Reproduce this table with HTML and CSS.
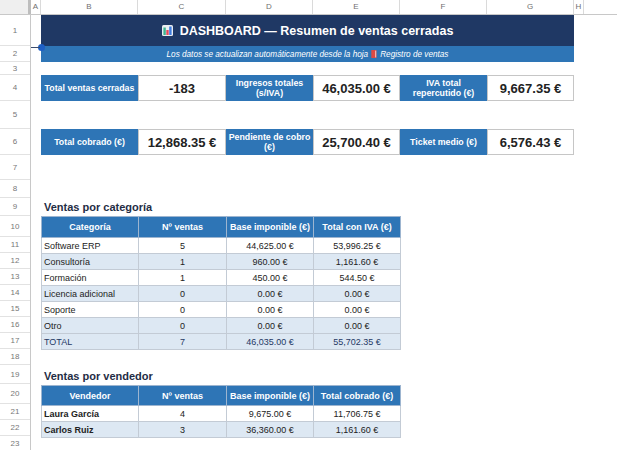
FILE: index.html
```html
<!DOCTYPE html>
<html lang="es">
<head>
<meta charset="utf-8">
<title>Dashboard</title>
<link rel="stylesheet" href="styles.css">
</head>
<body>
<div class="sheet">
  <div class="colbar">
    <div class="corner"></div>
    <div class="ch w-a">A</div>
    <div class="ch w-b">B</div>
    <div class="ch w-c">C</div>
    <div class="ch w-d">D</div>
    <div class="ch w-d">E</div>
    <div class="ch w-d">F</div>
    <div class="ch w-d">G</div>
    <div class="ch w-a">H</div>
    <div class="ch rest"></div>
  </div>
  <div class="main">
    <div class="rowbar">
      <div class="rh r1">1</div>
      <div class="rh r2">2</div>
      <div class="rh r3">3</div>
      <div class="rh r4">4</div>
      <div class="rh r5">5</div>
      <div class="rh r4">6</div>
      <div class="rh r7">7</div>
      <div class="rh r8">8</div>
      <div class="rh r8">9</div>
      <div class="rh r10">10</div>
      <div class="rh r16">11</div>
      <div class="rh r16">12</div>
      <div class="rh r16">13</div>
      <div class="rh r16">14</div>
      <div class="rh r16">15</div>
      <div class="rh r16">16</div>
      <div class="rh r16">17</div>
      <div class="rh r16">18</div>
      <div class="rh r19">19</div>
      <div class="rh r20">20</div>
      <div class="rh r16">21</div>
      <div class="rh r16">22</div>
      <div class="rh r16">23</div>
    </div>
    <div class="content">
      <div class="title r1">
        <svg class="ico-chart" width="11" height="11" viewBox="0 0 11 11"><rect x="0" y="0" width="11" height="11" rx="1.5" fill="#e9edf1"/><rect x="1.4" y="2.5" width="2.4" height="7.5" fill="#3db38f"/><rect x="4.3" y="5" width="2.4" height="5" fill="#e8485a"/><rect x="7.2" y="1.5" width="2.4" height="8.5" fill="#3d7de0"/></svg>
        <span>DASHBOARD — Resumen de ventas cerradas</span>
      </div>
      <div class="subtitle r2">
        <span>Los datos se actualizan automáticamente desde la hoja</span>
        <svg class="ico-book" width="6" height="8" viewBox="0 0 6 8"><rect x="0.3" y="0" width="5.2" height="8" rx="0.6" fill="#de4a44"/><rect x="4.2" y="0.6" width="1" height="6.8" fill="#f5cfcb"/></svg>
        <span>Registro de ventas</span>
      </div>
      <div class="r3"></div>
      <div class="kpis r4">
        <div class="kl">Total ventas cerradas</div>
        <div class="kv">-183</div>
        <div class="kl">Ingresos totales (s/IVA)</div>
        <div class="kv">46,035.00 €</div>
        <div class="kl">IVA total repercutido (€)</div>
        <div class="kv">9,667.35 €</div>
      </div>
      <div class="r5"></div>
      <div class="kpis r4">
        <div class="kl">Total cobrado (€)</div>
        <div class="kv">12,868.35 €</div>
        <div class="kl">Pendiente de cobro (€)</div>
        <div class="kv">25,700.40 €</div>
        <div class="kl">Ticket medio (€)</div>
        <div class="kv">6,576.43 €</div>
      </div>
      <div class="r7"></div>
      <div class="r8"></div>
      <h2 class="section r8">Ventas por categoría</h2>
      <table class="data">
        <colgroup><col class="cb"><col class="cc"><col class="cd"><col class="cd"></colgroup>
        <thead>
          <tr class="r10"><th>Categoría</th><th>Nº ventas</th><th>Base imponible (€)</th><th>Total con IVA (€)</th></tr>
        </thead>
        <tbody>
          <tr><td class="name">Software ERP</td><td>5</td><td>44,625.00 €</td><td>53,996.25 €</td></tr>
          <tr class="alt"><td class="name">Consultoría</td><td>1</td><td>960.00 €</td><td>1,161.60 €</td></tr>
          <tr><td class="name">Formación</td><td>1</td><td>450.00 €</td><td>544.50 €</td></tr>
          <tr class="alt"><td class="name">Licencia adicional</td><td>0</td><td>0.00 €</td><td>0.00 €</td></tr>
          <tr><td class="name">Soporte</td><td>0</td><td>0.00 €</td><td>0.00 €</td></tr>
          <tr class="alt"><td class="name">Otro</td><td>0</td><td>0.00 €</td><td>0.00 €</td></tr>
          <tr class="alt total"><td class="name">TOTAL</td><td>7</td><td>46,035.00 €</td><td>55,702.35 €</td></tr>
        </tbody>
      </table>
      <div class="r16"></div>
      <h2 class="section r19">Ventas por vendedor</h2>
      <table class="data">
        <colgroup><col class="cb"><col class="cc"><col class="cd"><col class="cd"></colgroup>
        <thead>
          <tr class="r20"><th>Vendedor</th><th>Nº ventas</th><th>Base imponible (€)</th><th>Total cobrado (€)</th></tr>
        </thead>
        <tbody>
          <tr><td class="name strong">Laura García</td><td>4</td><td>9,675.00 €</td><td>11,706.75 €</td></tr>
          <tr class="alt"><td class="name strong">Carlos Ruiz</td><td>3</td><td>36,360.00 €</td><td>1,161.60 €</td></tr>
        </tbody>
      </table>
    </div>
  </div>
  <span class="handle"></span>
</div>
</body>
</html>
```

FILE: styles.css
```css
* { box-sizing: border-box; }
html, body { margin: 0; padding: 0; background: #fff; }
body { font-family: "Liberation Sans", Arial, sans-serif; color: #222; }

.sheet { position: relative; width: 617px; height: 450px; overflow: hidden; }

/* column letters */
.colbar { display: flex; height: 15px; border-bottom: 1px solid #c8c8c8; }
.corner { width: 31px; background: #efefef; border-right: 3px solid #bdbdbd; }
.ch { border-right: 1px solid #dadada; font-size: 8px; color: #6f6f6f; text-align: center; line-height: 14px; }
.w-a { width: 10px; }
.w-b { width: 97px; }
.w-c { width: 88px; }
.w-d { width: 87px; }
.ch.rest { flex: 1; border-right: 0; }

/* body */
.main { display: flex; }
.rowbar { width: 31px; border-right: 1px solid #c8c8c8; display: flex; flex-direction: column; }
.rh { border-bottom: 1px solid #e2e2e2; font-size: 8px; color: #777; display: flex; align-items: center; justify-content: center; flex: none; }

.r1 { height: 31px; }
.r2 { height: 16px; }
.r3 { height: 13px; }
.r4 { height: 26px; }
.r5 { height: 28px; }
.r7 { height: 25px; }
.r8 { height: 18px; }
.r10 { height: 21px; }
.r16 { height: 16px; }
.r19 { height: 19px; }
.r20 { height: 20px; }

.content { margin-left: 10px; width: 533px; display: flex; flex-direction: column; }
.content > div { flex: none; }

.title { background: #1f3864; color: #fff; font-weight: bold; font-size: 12.5px; display: flex; align-items: center; justify-content: center; gap: 7px; }
.ico-chart { display: block; }

.subtitle { background: #2e75b6; color: #fff; font-style: italic; font-size: 8.2px; display: flex; align-items: center; justify-content: center; gap: 3px; }
.ico-book { display: block; }

.kpis { display: grid; grid-template-columns: 97px 88px 87px 87px 87px 87px; }
.kl { background: #2e75b6; color: #fff; font-weight: bold; font-size: 8.8px; line-height: 10px; display: flex; align-items: center; justify-content: center; text-align: center; padding: 0 1px; }
.kv { border: 1px solid #c6c6c6; background: #fff; display: flex; align-items: center; justify-content: center; font-size: 13px; font-weight: bold; color: #222; }

.section { margin: 0; padding-left: 3px; font-size: 11px; font-weight: bold; color: #1f2d45; display: flex; align-items: center; flex: none; }

.data { border-collapse: collapse; table-layout: fixed; width: 359px; font-size: 9px; flex: none; }
.data .cb { width: 97px; }
.data .cc { width: 88px; }
.data .cd { width: 87px; }
.data th { background: #2e75b6; color: #fff; font-weight: bold; border: 1px solid #9db5d0; padding: 0; text-align: center; }
.data td { border: 1px solid #c3cbd5; padding: 0; height: 16px; text-align: center; color: #222; }
.data td.name { text-align: left; padding-left: 2px; }
.data td.strong { font-weight: bold; }
.data .alt td { background: #dde8f3; }
.data .total td { color: #1f3864; }

/* selection handle overlay */
.handle { position: absolute; left: 38px; top: 44px; width: 7px; height: 7px; border-radius: 50%; background: #1f5fc4; }
.handle::before { content: ""; position: absolute; right: 5px; top: 3px; width: 9px; height: 1px; background: #3a4d70; }
```
